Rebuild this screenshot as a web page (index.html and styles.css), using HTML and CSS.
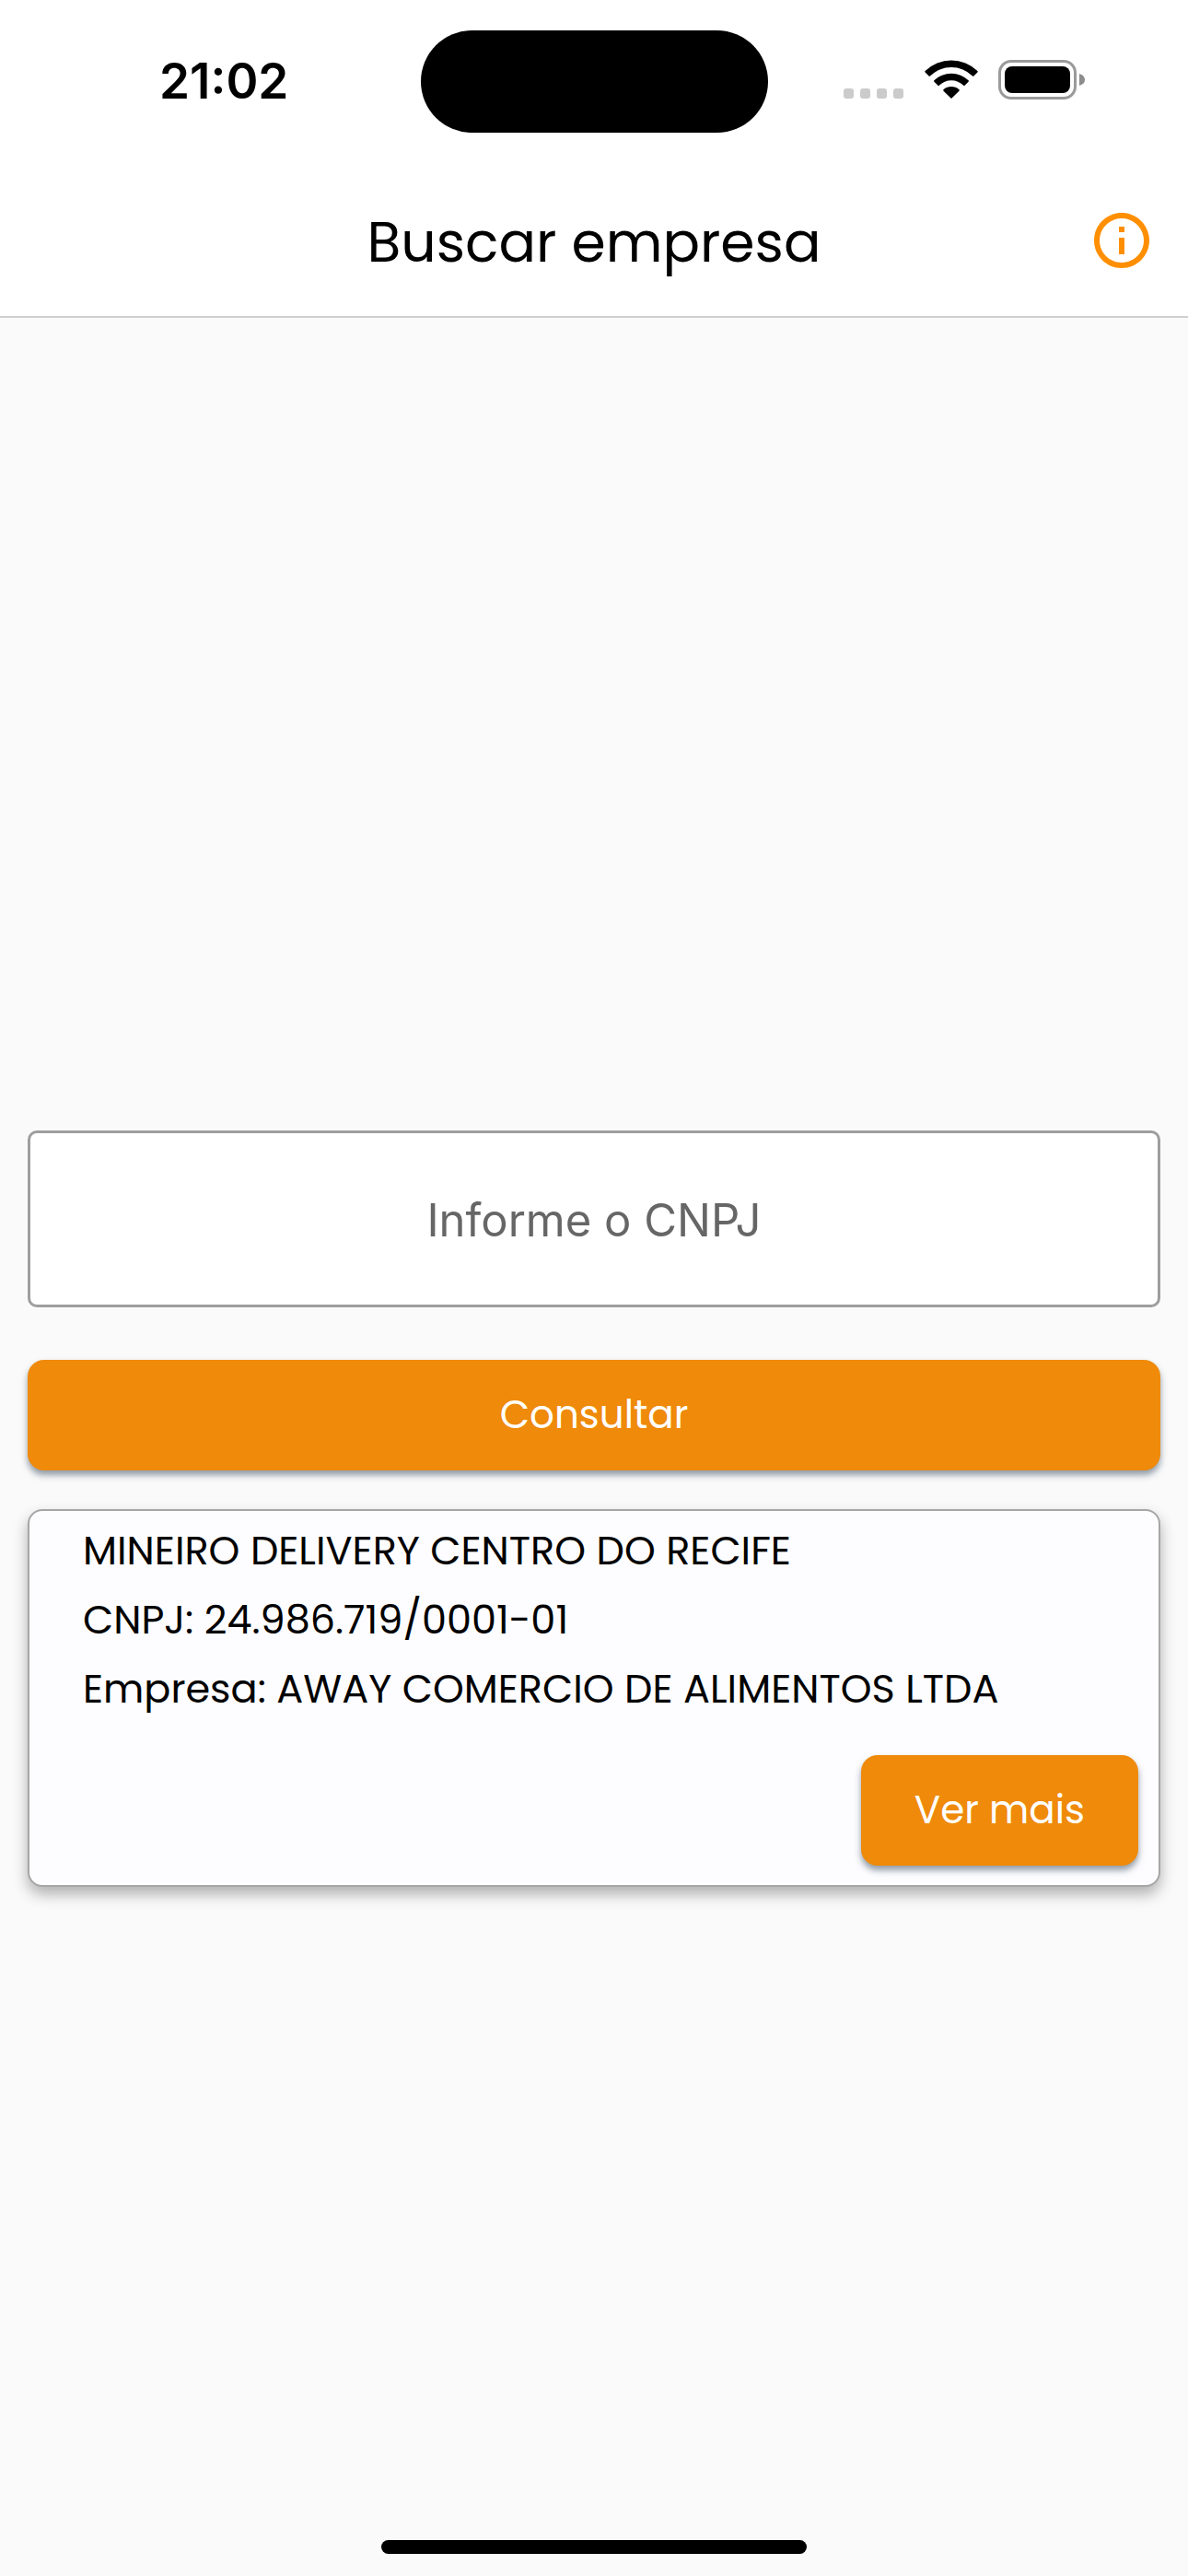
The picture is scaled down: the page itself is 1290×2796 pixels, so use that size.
FILE: index.html
```html
<!DOCTYPE html>
<html lang="pt-BR">
<head>
<meta charset="utf-8">
<meta name="viewport" content="width=device-width, initial-scale=1">
<title>Buscar empresa</title>
<link rel="stylesheet" href="styles.css">
</head>
<body>
<div class="screen">
  <div class="status-bar">
    <time class="clock">21:02</time>
    <div class="island"></div>
    <div class="indicators">
      <svg width="66" height="44" viewBox="0 0 66 44" fill="#cbcbcb" aria-hidden="true">
        <rect x="0" y="31" width="11" height="11" rx="3"/>
        <rect x="18" y="31" width="11" height="11" rx="3"/>
        <rect x="36" y="31" width="11" height="11" rx="3"/>
        <rect x="54" y="31" width="11" height="11" rx="3"/>
      </svg>
      <svg width="58" height="44" viewBox="0 0 58 44" aria-hidden="true">
        <path d="M29 42 20.500 33.700a1 1 0 0 1 0-1.400C25 28 33 28 37.500 32.300a1 1 0 0 1 0 1.400Z"/>
        <path d="M10.400 22.300a26.500 26.500 0 0 1 37.200 0 1 1 0 0 1 0 1.400l-4 4a1 1 0 0 1-1.400 0 18.800 18.800 0 0 0-26.400 0 1 1 0 0 1-1.400 0l-4-4a1 1 0 0 1 0-1.400Z"/>
        <path d="M.6 12a40.600 40.600 0 0 1 56.800 0 1 1 0 0 1 0 1.400l-4 4.100a1 1 0 0 1-1.400 0 32.900 32.900 0 0 0-46 0 1 1 0 0 1-1.400 0l-4-4.100a1 1 0 0 1 0-1.400Z"/>
      </svg>
      <svg width="95" height="44" viewBox="0 0 95 44" aria-hidden="true">
        <rect x="1.500" y="1.500" width="82" height="40" rx="12.500" fill="none" stroke="#9a9a9a" stroke-width="3"/>
        <rect x="7" y="7" width="71" height="29" rx="8"/>
        <path d="M88 15q6 2 6 6.500T88 28Z" fill="#8c8c8c"/>
      </svg>
    </div>
  </div>

  <header class="app-bar">
    <h1 class="title">Buscar empresa</h1>
    <button class="info-button" type="button" aria-label="Informações">
      <svg width="72" height="72" viewBox="0 0 24 24" fill="#ff8f00" aria-hidden="true">
        <path d="M11 7h2v2h-2zm0 4h2v6h-2zm1-9C6.480 2 2 6.480 2 12s4.480 10 10 10 10-4.480 10-10S17.520 2 12 2m0 18c-4.410 0-8-3.590-8-8s3.590-8 8-8 8 3.590 8 8-3.590 8-8 8"/>
      </svg>
    </button>
  </header>

  <main class="content">
    <form class="search">
      <input class="field" type="text" inputmode="numeric" placeholder="Informe o CNPJ" aria-label="Informe o CNPJ">
      <button class="button" type="button">Consultar</button>
    </form>
    <article class="card">
      <div class="details">
        <p>MINEIRO DELIVERY CENTRO DO RECIFE</p>
        <p>CNPJ: 24.986.719/0001-01</p>
        <p>Empresa: AWAY COMERCIO DE ALIMENTOS LTDA</p>
      </div>
      <button class="button more" type="button">Ver mais</button>
    </article>
  </main>

  <div class="home-indicator"></div>
</div>
</body>
</html>
```
FILE: styles.css
```css
* {
  box-sizing: border-box;
  margin: 0;
}

body {
  background: #fafafa;
  color: #000;
  font-family: Poppins, Inter, sans-serif;
}

.screen {
  display: flex;
  flex-direction: column;
  min-height: 100vh;
}

/* Device status bar */
.status-bar {
  display: grid;
  grid-template-columns: 1fr auto 1fr;
  align-items: center;
  padding: 33px 30px;
  background: #fff;
}

.clock {
  padding-bottom: 2px;
  font: 600 53px/64px Inter, sans-serif;
  text-align: center;
}

.island {
  width: 377px;
  height: 111px;
  border-radius: 56px;
  background: #000;
}

.indicators {
  display: flex;
  justify-content: center;
  align-items: center;
  gap: 22px;
  padding: 0 0 4px 2px;
}

/* App bar */
.app-bar {
  display: grid;
  grid-template-columns: 72px 1fr 72px;
  align-items: center;
  padding: 44px 36px 42px;
  background: #fff;
  border-bottom: 2px solid #cfcfcf;
}

.title {
  grid-column: 2;
  padding-top: 4px;
  font-size: 60px;
  line-height: 76px;
  font-weight: 400;
  text-align: center;
}

.info-button {
  display: flex;
  padding: 0;
  border: 0;
  background: none;
}

/* Search form and result */
.content {
  display: flex;
  flex-direction: column;
  gap: 42px;
  padding: 882px 30px 60px;
}

.search {
  display: flex;
  flex-direction: column;
  gap: 57px;
}

.field {
  width: 100%;
  padding: 64px 36px 61px;
  border: 3px solid #9e9e9e;
  border-radius: 10px;
  background: #fff;
  color: #000;
  font: 400 49px/61px Inter, sans-serif;
  text-align: center;
}

.field::placeholder {
  color: #666;
  opacity: 1;
}

.button {
  padding: 30px 58px;
  border: 0;
  border-radius: 18px;
  background: #ef8a0a;
  box-shadow: 0 5px 7px rgba(40, 60, 80, 0.5);
  color: #fff;
  font: 400 42px/60px Poppins, Inter, sans-serif;
}

.card {
  display: flex;
  flex-direction: column;
  padding: 6px 22px 21px 58px;
  border: 2px solid #a6a6a6;
  border-radius: 16px;
  background: #fdfdff;
  box-shadow: 0 8px 16px rgba(0, 0, 0, 0.3);
}

.details {
  font-size: 43px;
  line-height: 75px;
}

.more {
  align-self: flex-end;
  margin-top: 34px;
}

.home-indicator {
  width: 462px;
  height: 15px;
  margin: auto auto 24px;
  border-radius: 8px;
  background: #000;
}
```
